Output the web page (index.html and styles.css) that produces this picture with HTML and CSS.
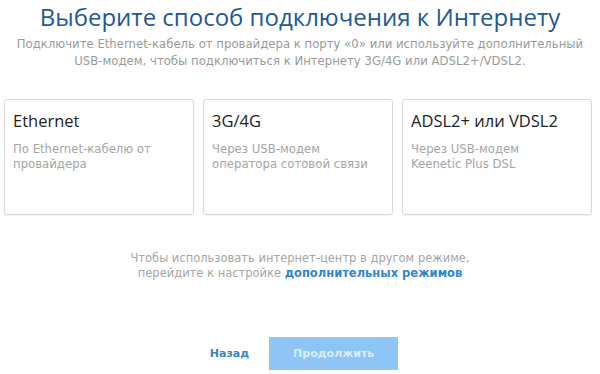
FILE: index.html
```html
<!DOCTYPE html>
<html lang="ru">
<head>
    <meta charset="UTF-8">
    <meta name="viewport" content="width=device-width, initial-scale=1.0">
    <title>Выбор способа подключения</title>
    <link rel="stylesheet" href="styles.css">
</head>
<body>
    <div id="wizard">
        <h1 class="title">Выберите способ подключения к Интернету</h1>
        <p class="intro">Подключите Ethernet-кабель от провайдера к порту «0» или используйте дополнительный<br>
            USB-модем, чтобы подключиться к Интернету 3G/4G или ADSL2+/VDSL2.</p>

        <div class="options">
            <div class="option">
                <div class="option-name">Ethernet</div>
                <div class="option-desc">По Ethernet-кабелю от<br>провайдера</div>
            </div>
            <div class="option">
                <div class="option-name">3G/4G</div>
                <div class="option-desc">Через USB-модем<br>оператора сотовой связи</div>
            </div>
            <div class="option">
                <div class="option-name">ADSL2+ или VDSL2</div>
                <div class="option-desc">Через USB-модем<br>Keenetic Plus DSL</div>
            </div>
        </div>

        <p class="modes">Чтобы использовать интернет-центр в другом режиме,<br>
            перейдите к настройке <a href="#" class="link">дополнительных режимов</a></p>

        <div class="actions">
            <a href="#" class="back">Назад</a>
            <button class="next" disabled>Продолжить</button>
        </div>
    </div>
</body>
</html>
```

FILE: styles.css
```css
body {
    margin: 0;
    padding: 0;
    background-color: #fff;
    font-family: "DejaVu Sans", Verdana, sans-serif;
}

#wizard {
    display: flex;
    flex-direction: column;
    align-items: center;
    width: 600px;
}

.title {
    margin: 0;
    font-family: "Open Sans", sans-serif;
    font-weight: 400;
    font-size: 24px;
    line-height: 34px;
    color: #225994;
}

.intro {
    margin: 2px 0 0;
    font-size: 11.7px;
    line-height: 17px;
    color: #9a9a9a;
    text-align: center;
}

.options {
    display: grid;
    grid-template-columns: repeat(3, 1fr);
    gap: 9px;
    width: 588px;
    margin-top: 29px;
    margin-left: 4px;
    align-self: flex-start;
}

.option {
    height: 116px;
    box-sizing: border-box;
    padding: 10px 8px;
    border: 1px solid #d9d9d9;
    border-radius: 3px;
    box-shadow: 0 1px 2px rgba(0, 0, 0, 0.06);
}

.option-name {
    font-family: "Open Sans", sans-serif;
    font-size: 16.5px;
    line-height: 22px;
    color: #222;
}

.option-desc {
    margin-top: 10px;
    font-size: 11.7px;
    line-height: 15px;
    color: #a5a5a5;
}

.modes {
    margin: 36px 0 0;
    font-size: 11.5px;
    line-height: 15px;
    color: #a5a5a5;
    text-align: center;
}

.link {
    color: #2f86cf;
    font-weight: bold;
    text-decoration: none;
}

.actions {
    display: flex;
    align-items: center;
    gap: 20px;
    margin-top: 56px;
    margin-left: 8px;
}

.back {
    font-size: 11px;
    font-weight: bold;
    color: #3d84c6;
    text-decoration: none;
}

.next {
    width: 129px;
    height: 33px;
    border: none;
    border-radius: 0;
    background-color: #8ec5f6;
    color: #dcedfc;
    font-family: "DejaVu Sans", Verdana, sans-serif;
    font-size: 11px;
    font-weight: bold;
}
```
